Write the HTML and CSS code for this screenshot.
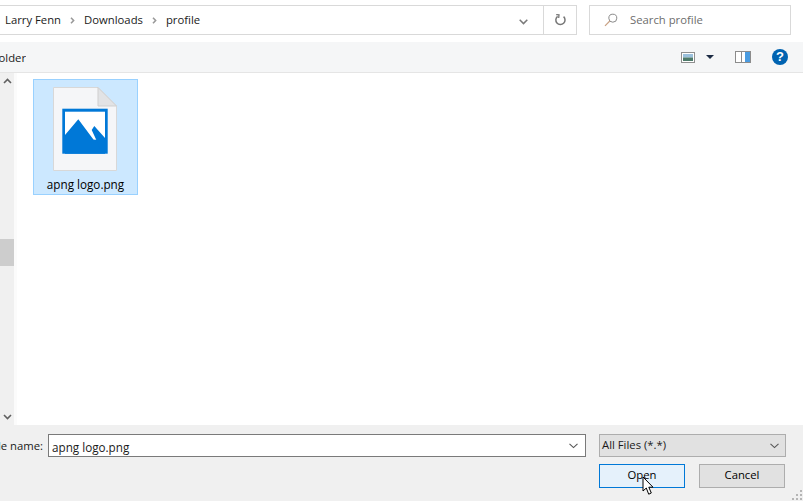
FILE: index.html
```html
<!DOCTYPE html>
<html lang="en">
<head>
  <meta charset="UTF-8">
  <title>Open</title>
  <link rel="stylesheet" href="styles.css">
</head>
<body>
  <div class="dialog">
    <div class="addressRow">
      <div class="pathBox">
        <div class="crumbs">
          <span>Larry Fenn</span>
          <svg class="sep" width="5" height="7" viewBox="0 0 5 7"><path d="M1 0.8L3.6 3.500L1 6.2" fill="none" stroke="#999" stroke-width="1.6"/></svg>
          <span>Downloads</span>
          <svg class="sep" width="5" height="7" viewBox="0 0 5 7"><path d="M1 0.8L3.6 3.500L1 6.2" fill="none" stroke="#999" stroke-width="1.6"/></svg>
          <span>profile</span>
        </div>
        <div class="pathDrop">
          <svg width="9" height="6" viewBox="0 0 9 6"><path d="M0.7 0.8L4.5 4.6L8.3 0.8" fill="none" stroke="#7a7a7a" stroke-width="1.5"/></svg>
        </div>
        <div class="refresh">
          <svg width="12" height="12" viewBox="0 0 12 12"><path d="M3.6 2.3A4.6 4.6 0 1 0 9.6 2.6" fill="none" stroke="#777" stroke-width="1.5"/><path d="M2.2 0.6L5 0.9L4.7 4" fill="none" stroke="#777" stroke-width="1.3"/></svg>
        </div>
      </div>
      <div class="searchBox">
        <svg width="14" height="14" viewBox="0 0 14 14"><circle cx="8.8" cy="5.2" r="4" fill="none" stroke="#8a8a8a"/><path d="M5.8 8L1 12.8" stroke="#c9a184" stroke-width="1.2"/></svg>
        <span>Search profile</span>
      </div>
    </div>

    <div class="toolbar">
      <div class="newFolder"><span>New folder</span></div>
      <div class="tools">
        <svg class="viewIcon" width="14" height="11" viewBox="0 0 14 11"><rect x="0.5" y="0.5" width="13" height="10" fill="#fff" stroke="#8f8f8f"/><rect x="2" y="2" width="10" height="3.5" fill="#9ac0dc"/><rect x="2" y="5.5" width="10" height="3.5" fill="#4d7a6a"/></svg>
        <svg class="caret" width="8" height="4" viewBox="0 0 8 4"><path d="M0 0H8L4 4Z" fill="#1c2b44"/></svg>
        <svg class="paneIcon" width="16" height="12" viewBox="0 0 16 12"><rect x="0.5" y="0.5" width="15" height="11" fill="#fff" stroke="#8c8c8c"/><rect x="6" y="1" width="1" height="10" fill="#8c8c8c"/><rect x="10" y="1" width="5" height="10" fill="#4a9be0"/></svg>
        <div class="helpIcon">?</div>
      </div>
    </div>

    <div class="main">
      <div class="scrollbar">
        <svg width="9" height="6" viewBox="0 0 9 6"><path d="M1 5L4.5 1.5L8 5" fill="none" stroke="#606060" stroke-width="1.6"/></svg>
        <div class="thumb"></div>
        <svg width="9" height="6" viewBox="0 0 9 6"><path d="M1 1L4.5 4.5L8 1" fill="none" stroke="#606060" stroke-width="1.6"/></svg>
      </div>
      <div class="navGap"></div>
      <div class="files">
        <div class="fileItem">
          <svg class="fileIcon" width="64" height="84" viewBox="0 0 64 84">
            <path d="M0.5 0.5H45L63.5 19V83.5H0.5Z" fill="#f5f6f8" stroke="#d8d8d8"/>
            <path d="M45 0.5V19H63.5Z" fill="#e2e3e5" stroke="#cfcfcf"/>
            <rect x="9.3" y="21.700" width="45.400" height="45" fill="#0078d7"/>
            <rect x="12" y="24.700" width="40" height="28" fill="#fff"/>
            <path d="M12 48L25.300 32.300L47.500 62L38.700 43L41.300 39L52 51V66.700H12Z" fill="#0078d7"/>
          </svg>
          <div class="fileName">apng logo.png</div>
        </div>
      </div>
    </div>

    <div class="footer">
      <div class="nameRow">
        <div class="nameLabel"><span>File name:</span></div>
        <div class="nameInput">
          <span class="nameValue">apng logo.png</span>
          <svg width="9" height="6" viewBox="0 0 9 6"><path d="M0.5 0.8L4.500 4.600L8.500 0.8" fill="none" stroke="#555" stroke-width="1.1"/></svg>
        </div>
        <div class="typeSelect">
          <span>All Files (*.*)</span>
          <svg width="9" height="6" viewBox="0 0 9 6"><path d="M0.5 0.8L4.500 4.600L8.500 0.8" fill="none" stroke="#555" stroke-width="1.1"/></svg>
        </div>
      </div>
      <div class="buttonRow">
        <button class="btn btnPrimary" type="button">Open</button>
        <button class="btn" type="button">Cancel</button>
      </div>
      <svg class="cursor" width="14" height="20" viewBox="0 0 14 20"><path d="M1 1V15L4.300 12L6.700 18.200L9.300 17L6.800 11.200H11Z" fill="#fff" stroke="#000" stroke-width="1"/></svg>
      <svg class="grip" width="11" height="11" viewBox="0 0 11 11"><g fill="#b5b5b5"><rect x="8" y="8" width="2" height="2"/><rect x="4" y="8" width="2" height="2"/><rect x="0" y="8" width="2" height="2"/><rect x="8" y="4" width="2" height="2"/><rect x="4" y="4" width="2" height="2"/><rect x="8" y="0" width="2" height="2"/></g></svg>
    </div>
  </div>
</body>
</html>
```

FILE: styles.css
```css
html, body {
  margin: 0;
  padding: 0;
}

body {
  width: 803px;
  height: 501px;
  overflow: hidden;
  background-color: #fff;
  font-family: "Open Sans", "Noto Sans", sans-serif;
  font-size: 11.3px;
  color: #1a1a1a;
}

.dialog {
  width: 803px;
  height: 501px;
  display: flex;
  flex-direction: column;
}

.addressRow {
  height: 30px;
  margin-top: 5px;
  margin-bottom: 7px;
  display: flex;
}

.pathBox {
  width: 577px;
  display: flex;
  align-items: center;
  box-sizing: border-box;
  border: 1px solid #d9d9d9;
  border-left: none;
}

.crumbs {
  flex: 1;
  display: flex;
  align-items: center;
  padding-left: 5px;
  padding-bottom: 2px;
}

.sep {
  margin: 2px 9px 0 9px;
}

.pathDrop {
  width: 33px;
  padding-left: 9px;
  box-sizing: border-box;
}

.refresh {
  width: 33px;
  height: 28px;
  border-left: 1px solid #d9d9d9;
  display: flex;
  align-items: center;
  justify-content: center;
  box-sizing: border-box;
}

.searchBox {
  width: 202px;
  margin-left: 12px;
  box-sizing: border-box;
  border: 1px solid #d9d9d9;
  display: flex;
  align-items: center;
  padding-left: 14px;
  color: #6d6d6d;
}

.searchBox span {
  margin-left: 12px;
  margin-bottom: 2px;
}

.toolbar {
  height: 30px;
  background-color: #f5f6f7;
  border-bottom: 1px solid #e5e5e5;
  display: flex;
  align-items: center;
  justify-content: space-between;
}

.newFolder {
  width: 26px;
  overflow: hidden;
  display: flex;
  justify-content: flex-end;
  white-space: nowrap;
}

.tools {
  display: flex;
  align-items: center;
  padding-right: 15px;
}

.caret {
  margin-left: 11px;
}

.paneIcon {
  margin-left: 21px;
}

.helpIcon {
  width: 16px;
  height: 16px;
  margin-left: 21px;
  border-radius: 50%;
  background-color: #0063b1;
  color: #fff;
  font-family: "Liberation Sans", sans-serif;
  font-weight: bold;
  font-size: 13px;
  line-height: 16px;
  text-align: center;
}

.main {
  height: 352px;
  display: flex;
  background-color: #fff;
}

.scrollbar {
  width: 14px;
  background-color: #f0f0f0;
  position: relative;
  display: flex;
  flex-direction: column;
  align-items: center;
  justify-content: space-between;
  padding: 5px 0;
  box-sizing: border-box;
}

.thumb {
  position: absolute;
  left: 0;
  top: 166px;
  width: 14px;
  height: 27px;
  background-color: #cdcdcd;
}

.navGap {
  width: 3px;
  background-color: #fbfbfb;
}

.files {
  flex: 1;
  padding: 6px 0 0 16px;
}

.fileItem {
  width: 105px;
  height: 116px;
  box-sizing: border-box;
  background-color: #cce8ff;
  border: 1px solid #99d1ff;
  display: flex;
  flex-direction: column;
  align-items: center;
  padding-top: 7px;
}

.fileIcon {
  margin-right: 1px;
}

.fileName {
  margin-top: 5px;
  font-size: 11.7px;
  color: #000;
}

.footer {
  flex: 1;
  background-color: #f0f0f0;
  position: relative;
  padding-top: 9px;
  box-sizing: border-box;
}

.nameRow {
  display: flex;
  align-items: center;
  height: 23px;
}

.nameLabel {
  width: 43px;
  overflow: hidden;
  display: flex;
  justify-content: flex-end;
  white-space: nowrap;
}

.nameInput {
  width: 538px;
  height: 23px;
  margin-left: 5px;
  box-sizing: border-box;
  background-color: #fff;
  border: 1px solid #7a7a7a;
  display: flex;
  align-items: center;
  justify-content: space-between;
  padding: 0 3px 0 3px;
}

.nameValue {
  font-size: 11.7px;
  margin-top: 2px;
}

.typeSelect {
  width: 187px;
  height: 23px;
  margin-left: 13px;
  box-sizing: border-box;
  background-color: #e1e1e1;
  border: 1px solid #adadad;
  display: flex;
  align-items: center;
  justify-content: space-between;
  padding: 0 3px 0 2px;
}

.typeSelect span {
  margin-bottom: 2px;
}

.nameInput svg {
  margin-right: 4px;
}

.typeSelect svg {
  margin-right: 3px;
}

.buttonRow {
  display: flex;
  justify-content: flex-end;
  padding-right: 18px;
  margin-top: 7px;
}

.btn {
  width: 86px;
  height: 24px;
  margin-left: 14px;
  padding: 0 0 3px 0;
  box-sizing: border-box;
  background-color: #e1e1e1;
  border: 1px solid #adadad;
  font: inherit;
  color: #000;
}

.btnPrimary {
  background-color: #e5f1fb;
  border: 1px solid #0078d7;
}

.cursor {
  position: absolute;
  left: 642px;
  top: 51px;
}

.grip {
  position: absolute;
  right: 0;
  bottom: 0;
}
```
